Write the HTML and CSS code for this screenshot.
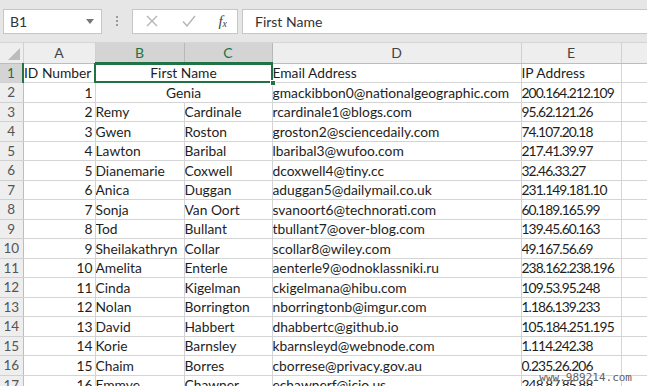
FILE: index.html
```html
<!DOCTYPE html>
<html>
    <head>
        <meta charset="utf-8">
        <title>Sheet1 - Excel</title>
        <link rel="stylesheet" href="styles.css">
    </head>
    <body>
        <div class="toolbar">
            <div class="namebox">
                <span>B1</span>
                <svg class="drop" width="8" height="5" viewBox="0 0 8 5"><path d="M0 0h8L4 5z" fill="#777"/></svg>
            </div>
            <div class="grip"><i></i><i></i><i></i></div>
            <div class="fxbtns">
                <svg width="14" height="14" viewBox="0 0 14 14"><path d="M2 2l10 10M12 2L2 12" stroke="#b4b4b4" stroke-width="1.4" fill="none"/></svg>
                <svg width="16" height="14" viewBox="0 0 16 14"><path d="M2 7.5l4 4.5L14 2" stroke="#b4b4b4" stroke-width="1.4" fill="none"/></svg>
                <span class="fx">f<sub>x</sub></span>
            </div>
            <div class="formula">First Name</div>
        </div>

        <table class="sheet">
            <colgroup>
                <col class="c-hd"><col class="c-a"><col class="c-b"><col class="c-c"><col class="c-d"><col class="c-e"><col class="c-f">
            </colgroup>
            <thead>
                <tr class="colhd">
                    <th class="corner"><span class="tri"></span></th>
                    <th>A</th><th class="on">B</th><th class="on">C</th><th>D</th><th>E</th><th></th>
                </tr>
            </thead>
            <tbody>
                <tr><th class="on">1</th><td>ID Number</td><td colspan="2" class="mid sel">First Name<span class="handle"></span></td><td>Email Address</td><td>IP Address</td><td></td></tr>
                <tr><th>2</th><td class="num">1</td><td colspan="2" class="mid">Genia</td><td>gmackibbon0@nationalgeographic.com</td><td class="ip">200.164.212.109</td><td></td></tr>
                <tr><th>3</th><td class="num">2</td><td>Remy</td><td>Cardinale</td><td>rcardinale1@blogs.com</td><td class="ip">95.62.121.26</td><td></td></tr>
                <tr><th>4</th><td class="num">3</td><td>Gwen</td><td>Roston</td><td>groston2@sciencedaily.com</td><td class="ip">74.107.20.18</td><td></td></tr>
                <tr><th>5</th><td class="num">4</td><td>Lawton</td><td>Baribal</td><td>lbaribal3@wufoo.com</td><td class="ip">217.41.39.97</td><td></td></tr>
                <tr><th>6</th><td class="num">5</td><td>Dianemarie</td><td>Coxwell</td><td>dcoxwell4@tiny.cc</td><td class="ip">32.46.33.27</td><td></td></tr>
                <tr><th>7</th><td class="num">6</td><td>Anica</td><td>Duggan</td><td>aduggan5@dailymail.co.uk</td><td class="ip">231.149.181.10</td><td></td></tr>
                <tr><th>8</th><td class="num">7</td><td>Sonja</td><td>Van Oort</td><td>svanoort6@technorati.com</td><td class="ip">60.189.165.99</td><td></td></tr>
                <tr><th>9</th><td class="num">8</td><td>Tod</td><td>Bullant</td><td>tbullant7@over-blog.com</td><td class="ip">139.45.60.163</td><td></td></tr>
                <tr><th>10</th><td class="num">9</td><td>Sheilakathryn</td><td>Collar</td><td>scollar8@wiley.com</td><td class="ip">49.167.56.69</td><td></td></tr>
                <tr><th>11</th><td class="num">10</td><td>Amelita</td><td>Enterle</td><td>aenterle9@odnoklassniki.ru</td><td class="ip">238.162.238.196</td><td></td></tr>
                <tr><th>12</th><td class="num">11</td><td>Cinda</td><td>Kigelman</td><td>ckigelmana@hibu.com</td><td class="ip">109.53.95.248</td><td></td></tr>
                <tr><th>13</th><td class="num">12</td><td>Nolan</td><td>Borrington</td><td>nborringtonb@imgur.com</td><td class="ip">1.186.139.233</td><td></td></tr>
                <tr><th>14</th><td class="num">13</td><td>David</td><td>Habbert</td><td>dhabbertc@github.io</td><td class="ip">105.184.251.195</td><td></td></tr>
                <tr><th>15</th><td class="num">14</td><td>Korie</td><td>Barnsley</td><td>kbarnsleyd@webnode.com</td><td class="ip">1.114.242.38</td><td></td></tr>
                <tr><th>16</th><td class="num">15</td><td>Chaim</td><td>Borres</td><td>cborrese@privacy.gov.au</td><td class="ip">0.235.26.206</td><td></td></tr>
                <tr><th>17</th><td class="num">16</td><td>Emmye</td><td>Chawner</td><td>echawnerf@icio.us</td><td class="ip">248.87.85.88</td><td></td></tr>
            </tbody>
        </table>

        <div class="mark">www.989214.com</div>
    </body>
</html>
```

FILE: styles.css
```css
*{box-sizing:border-box;}
body,html{
    margin:0;
    width:100%;
    height:100%;
    overflow:hidden;
    font-family: Lato, "Liberation Sans", sans-serif;
    color:#1e1e1e;
    background:#fff;
}
body{position:relative;}

/* formula bar */
.toolbar{display:flex; align-items:center; height:43px; background:#e6e6e6; padding:0 0 0 3px; border-bottom:1px solid #d6d6d6;}
.namebox{width:99px; height:25px; background:#fff; border:1px solid #c6c6c6; display:flex; align-items:center; justify-content:space-between; padding:0 7px 0 6px; font-size:14px; color:#333;}
.grip{width:30px; display:flex; flex-direction:column; align-items:center; gap:2px;}
.grip i{width:2px; height:2px; background:#9a9a9a;}
.fxbtns{width:106px; height:25px; background:#fff; border:1px solid #c6c6c6; display:flex; align-items:center; justify-content:space-between; padding:0 10px 0 12px;}
.fx{font-family:"Liberation Serif", serif; font-style:italic; font-size:15px; color:#444;}
.fx sub{font-size:10px; vertical-align:-1px;}
.formula{flex:1; height:25px; margin-left:4px; background:#fff; border:1px solid #c6c6c6; border-right:0; display:flex; align-items:center; padding-left:12px; font-size:14px; color:#333;}

/* grid */
.sheet{border-collapse:collapse; table-layout:fixed; width:650px; font-size:13.8px;}
.c-hd{width:23px;} .c-a{width:72px;} .c-b{width:89px;} .c-c{width:88px;}
.c-d{width:249px;} .c-e{width:100px;} .c-f{width:29px;}
.sheet th,.sheet td{padding:0; white-space:nowrap; overflow:hidden;}
.colhd{height:20px;}
.colhd th{background:#eeeeee; border-right:1px solid #d0d0d0; border-bottom:1px solid #bdbdbd; font-weight:normal; font-size:14px; color:#444; text-align:center;}
.colhd th.on{background:#d4d4d4; color:#217346; border-bottom:2px solid #217346; border-right-color:#b8b8b8;}
.corner{position:relative;}
.tri{position:absolute; right:3px; bottom:3px; border-style:solid; border-width:0 0 12px 12px; border-color:transparent transparent #bcbcbc transparent;}
tbody tr{height:19.5px;}
tbody th{background:#eeeeee; border-bottom:1px solid #d0d0d0; border-right:1px solid #bdbdbd; font-weight:normal; font-size:13.5px; color:#555; text-align:center;}
tbody th.on{background:#d4d4d4; color:#217346; border-right:2px solid #217346;}
tbody td{border-right:1px solid #d4d4d4; border-bottom:1px solid #d4d4d4; padding:0 2px; vertical-align:bottom; line-height:18px;}
td.num{text-align:right; padding-right:2px;}
td.mid{text-align:center;}
td.ip{letter-spacing:-0.9px;}
td.sel{position:relative; overflow:visible;}
td.sel::after{content:""; position:absolute; inset:-1px -1px -1px -2px; border:2px solid #217346; pointer-events:none;}
.handle{position:absolute; right:-4px; bottom:-4px; width:6px; height:6px; background:#217346; border:1px solid #fff; z-index:2;}

.mark{position:absolute; right:15px; bottom:2px; font-family:"DejaVu Sans Mono", monospace; font-size:11px; color:#5e5e5e; text-shadow:0 0 2px #fff, 0 0 2px #fff;}
```
